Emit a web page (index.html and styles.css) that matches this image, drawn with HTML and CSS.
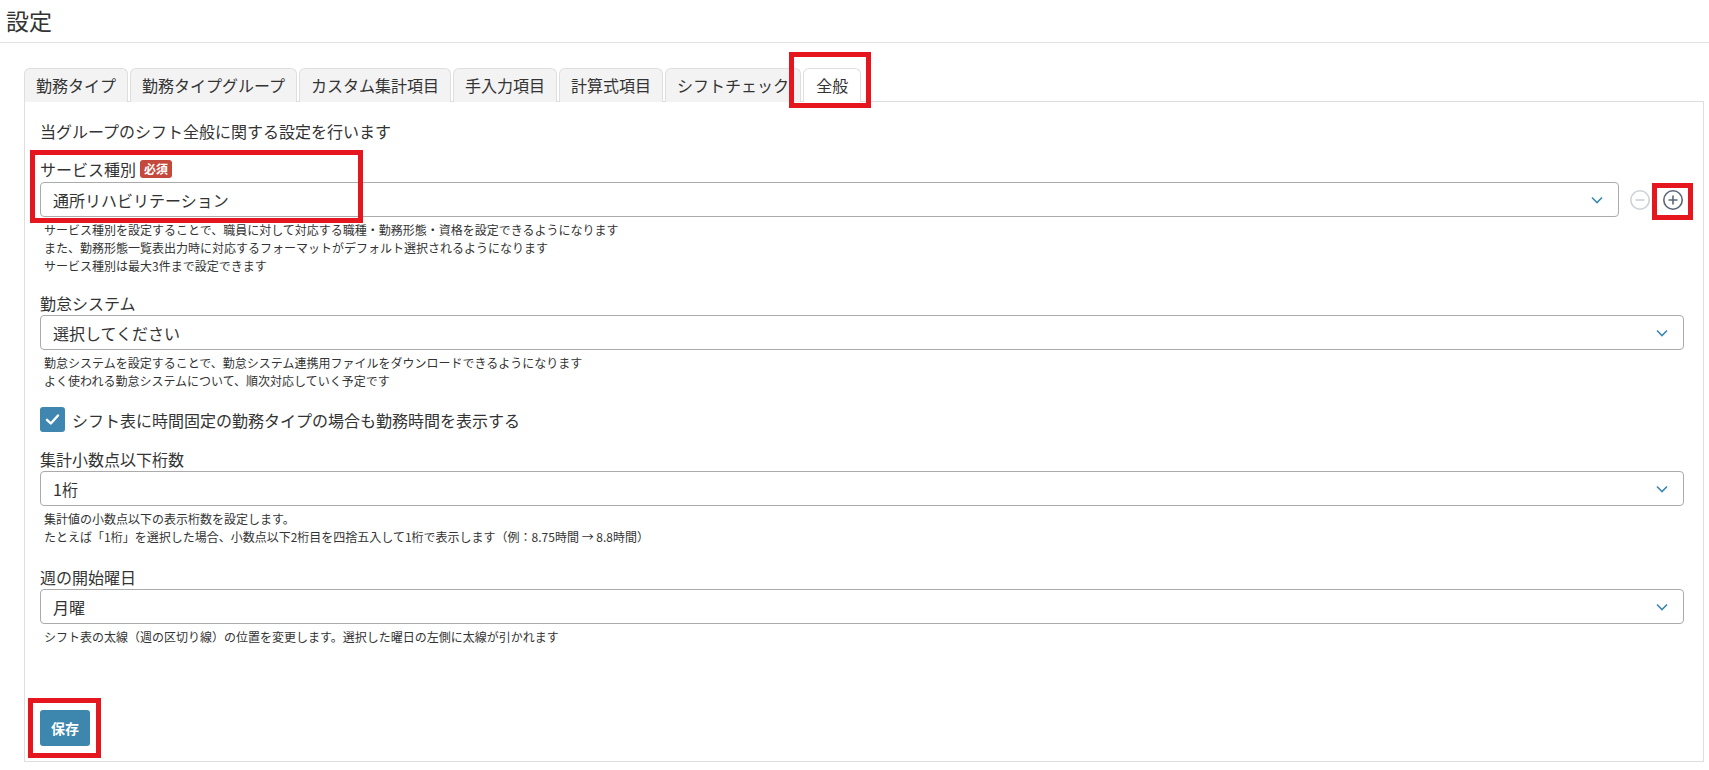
FILE: index.html
```html
<!DOCTYPE html>
<html lang="ja">
<head>
<meta charset="utf-8">
<title>設定</title>
<link rel="stylesheet" href="styles.css">
</head>
<body>
<header class="page-header">
  <h1 class="page-title">設定</h1>
</header>
<main class="content">
  <nav class="tabs">
    <div class="tab">勤務タイプ</div>
    <div class="tab">勤務タイプグループ</div>
    <div class="tab">カスタム集計項目</div>
    <div class="tab">手入力項目</div>
    <div class="tab">計算式項目</div>
    <div class="tab">シフトチェック</div>
    <div class="tab tab-active">全般<span class="annot annot-tab"></span></div>
  </nav>
  <section class="panel">
    <p class="intro">当グループのシフト全般に関する設定を行います</p>

    <div class="field field-service">
      <span class="annot annot-service"></span>
      <div class="label">サービス種別<span class="badge">必須</span></div>
      <div class="select-row">
        <div class="select">
          <span>通所リハビリテーション</span>
          <svg class="chev" width="12" height="8" viewBox="0 0 12 8"><path d="M1 1.5 L6 6.5 L11 1.5" fill="none" stroke="#3d87b0" stroke-width="1.6"/></svg>
        </div>
        <span class="icon-btn">
          <svg width="22" height="22" viewBox="0 0 22 22"><circle cx="11" cy="11" r="9.2" fill="none" stroke="#cdd2d8" stroke-width="1.6"/><path d="M6.5 11 H15.5" stroke="#cdd2d8" stroke-width="1.6"/></svg>
        </span>
        <span class="icon-btn">
          <svg width="22" height="22" viewBox="0 0 22 22"><circle cx="11" cy="11" r="9.2" fill="none" stroke="#5b6877" stroke-width="1.6"/><path d="M6.5 11 H15.5 M11 6.5 V15.5" stroke="#5b6877" stroke-width="1.6"/></svg>
          <span class="annot annot-plus"></span>
        </span>
      </div>
      <div class="help">
        <div>サービス種別を設定することで、職員に対して対応する職種・勤務形態・資格を設定できるようになります</div>
        <div>また、勤務形態一覧表出力時に対応するフォーマットがデフォルト選択されるようになります</div>
        <div>サービス種別は最大3件まで設定できます</div>
      </div>
    </div>

    <div class="field field-attend">
      <div class="label">勤怠システム</div>
      <div class="select">
        <span>選択してください</span>
        <svg class="chev" width="12" height="8" viewBox="0 0 12 8"><path d="M1 1.5 L6 6.5 L11 1.5" fill="none" stroke="#3d87b0" stroke-width="1.6"/></svg>
      </div>
      <div class="help">
        <div>勤怠システムを設定することで、勤怠システム連携用ファイルをダウンロードできるようになります</div>
        <div>よく使われる勤怠システムについて、順次対応していく予定です</div>
      </div>
    </div>

    <div class="check-row">
      <span class="checkbox">
        <svg width="17" height="17" viewBox="0 0 17 17"><path d="M3 8.8 L6.8 12.5 L14 4.5" fill="none" stroke="#fff" stroke-width="2.4" stroke-linecap="round" stroke-linejoin="round"/></svg>
      </span>
      <span class="check-label">シフト表に時間固定の勤務タイプの場合も勤務時間を表示する</span>
    </div>

    <div class="field field-decimal">
      <div class="label">集計小数点以下桁数</div>
      <div class="select">
        <span>1桁</span>
        <svg class="chev" width="12" height="8" viewBox="0 0 12 8"><path d="M1 1.5 L6 6.5 L11 1.5" fill="none" stroke="#3d87b0" stroke-width="1.6"/></svg>
      </div>
      <div class="help">
        <div>集計値の小数点以下の表示桁数を設定します。</div>
        <div>たとえば「1桁」を選択した場合、小数点以下2桁目を四捨五入して1桁で表示します（例：8.75時間 → 8.8時間）</div>
      </div>
    </div>

    <div class="field field-week">
      <div class="label">週の開始曜日</div>
      <div class="select">
        <span>月曜</span>
        <svg class="chev" width="12" height="8" viewBox="0 0 12 8"><path d="M1 1.5 L6 6.5 L11 1.5" fill="none" stroke="#3d87b0" stroke-width="1.6"/></svg>
      </div>
      <div class="help">
        <div>シフト表の太線（週の区切り線）の位置を変更します。選択した曜日の左側に太線が引かれます</div>
      </div>
    </div>

    <div class="actions">
      <button class="btn-save" type="button">保存<span class="annot annot-save"></span></button>
    </div>
  </section>
</main>
</body>
</html>
```

FILE: styles.css
```css
* {
  box-sizing: border-box;
}

html, body {
  margin: 0;
  padding: 0;
  background: #fff;
}

body {
  font-family: "Noto Sans CJK JP", "Noto Sans", sans-serif;
  color: #333;
  font-size: 16px;
}

.page-header {
  height: 43px;
  border-bottom: 1px solid #e1e1e1;
  padding-left: 6px;
}

.page-title {
  margin: 0;
  font-size: 23px;
  font-weight: 400;
  line-height: 40px;
  color: #333;
}

.content {
  padding: 25px 5px 8px 24px;
}

.tabs {
  display: flex;
  gap: 2px;
  height: 33px;
}

.tab {
  position: relative;
  height: 34px;
  padding: 0 11px;
  line-height: 32px;
  font-size: 16px;
  border: 1px solid #dedede;
  border-bottom: none;
  border-radius: 6px 6px 0 0;
  background: #f3f3f3;
  color: #333;
  white-space: nowrap;
}

.tab-active {
  background: #fff;
  z-index: 1;
  padding: 0 12px;
}

.panel {
  border: 1px solid #dedede;
  padding: 17px 19px 15px 15px;
  height: 661px;
  background: #fff;
}

.intro {
  margin: 0;
  line-height: 24px;
  font-size: 16px;
}

.field {
  position: relative;
}

.field-service {
  margin-top: 14px;
}

.field-attend {
  margin-top: 17px;
}

.field-decimal {
  margin-top: 16px;
}

.field-week {
  margin-top: 20px;
}

.label {
  display: flex;
  align-items: center;
  gap: 4px;
  line-height: 22px;
  min-height: 22px;
  margin-bottom: 1px;
  font-size: 16px;
}

.field-service .label {
  min-height: 24px;
}

.badge {
  display: inline-block;
  background: #c5483c;
  color: #fff;
  font-size: 12px;
  font-weight: 700;
  line-height: 18px;
  height: 18px;
  padding: 0 4px;
  border-radius: 3px;
}

.select-row {
  display: flex;
  align-items: center;
}

.select-row .select {
  flex: 1;
}

.select {
  display: flex;
  align-items: center;
  justify-content: space-between;
  height: 35px;
  border: 1px solid #ababab;
  border-radius: 4px;
  padding: 0 15px 0 12px;
  font-size: 16px;
  background: #fff;
}

.icon-btn {
  position: relative;
  display: flex;
  width: 22px;
  height: 22px;
  margin-left: 10px;
}

.icon-btn + .icon-btn {
  margin-left: 11px;
}

.help {
  margin-top: 4px;
  padding-left: 4px;
  font-size: 12px;
  line-height: 18px;
  color: #333;
}

.check-row {
  display: flex;
  align-items: center;
  gap: 7px;
  margin-top: 17px;
  height: 25px;
}

.checkbox {
  display: flex;
  align-items: center;
  justify-content: center;
  width: 25px;
  height: 25px;
  border-radius: 3px;
  background: #3f87b0;
}

.check-label {
  font-size: 16px;
  line-height: 24px;
}

.actions {
  margin-top: 64px;
}

.btn-save {
  position: relative;
  width: 50px;
  height: 36px;
  border: none;
  border-radius: 3px;
  background: #3d87ae;
  color: #fff;
  font-family: "Noto Sans CJK JP", "Noto Sans", sans-serif;
  font-size: 14px;
  font-weight: 700;
  padding: 0;
}

.annot {
  position: absolute;
  border: 5px solid #e5161e;
  pointer-events: none;
  z-index: 5;
}

.annot-tab {
  left: -15px;
  top: -17px;
  width: 82px;
  height: 56px;
}

.annot-service {
  left: -10px;
  top: -7px;
  width: 333px;
  height: 73px;
}

.annot-plus {
  left: -10px;
  top: -6px;
  width: 41px;
  height: 37px;
}

.annot-save {
  left: -12px;
  top: -12px;
  width: 73px;
  height: 60px;
}
```
